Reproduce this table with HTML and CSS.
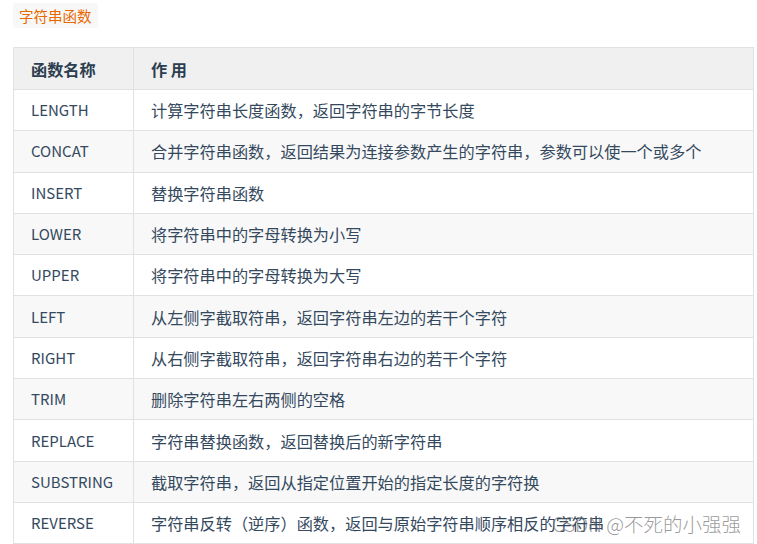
FILE: index.html
```html
<!DOCTYPE html>
<html lang="zh">
<head>
<meta charset="utf-8">
<link rel="stylesheet" href="styles.css">
</head>
<body>
<div class="page">
  <code class="tag">字符串函数</code>
  <table class="fn-table">
    <thead>
      <tr><th class="c1">函数名称</th><th>作 用</th></tr>
    </thead>
    <tbody>
      <tr><td class="c1">LENGTH</td><td>计算字符串长度函数，返回字符串的字节长度</td></tr>
      <tr><td class="c1">CONCAT</td><td>合并字符串函数，返回结果为连接参数产生的字符串，参数可以使一个或多个</td></tr>
      <tr><td class="c1">INSERT</td><td>替换字符串函数</td></tr>
      <tr><td class="c1">LOWER</td><td>将字符串中的字母转换为小写</td></tr>
      <tr><td class="c1">UPPER</td><td>将字符串中的字母转换为大写</td></tr>
      <tr><td class="c1">LEFT</td><td>从左侧字截取符串，返回字符串左边的若干个字符</td></tr>
      <tr><td class="c1">RIGHT</td><td>从右侧字截取符串，返回字符串右边的若干个字符</td></tr>
      <tr><td class="c1">TRIM</td><td>删除字符串左右两侧的空格</td></tr>
      <tr><td class="c1">REPLACE</td><td>字符串替换函数，返回替换后的新字符串</td></tr>
      <tr><td class="c1">SUBSTRING</td><td>截取字符串，返回从指定位置开始的指定长度的字符换</td></tr>
      <tr><td class="c1">REVERSE</td><td>字符串反转（逆序）函数，返回与原始字符串顺序相反的字符串</td></tr>
    </tbody>
  </table>
  <div class="watermark">CSDN @不死的小强强</div>
</div>
</body>
</html>
```

FILE: styles.css
```css
html, body {
  margin: 0;
  padding: 0;
  background: #ffffff;
  overflow: hidden;
}
body {
  font-family: "Noto Sans CJK SC", "Noto Sans", sans-serif;
  color: #34495e;
}
.page {
  position: relative;
  width: 757px;
  height: 544px;
  padding: 3px 3px 0 13px;
  box-sizing: border-box;
}
.tag {
  display: inline-block;
  font-family: "Noto Sans CJK SC", sans-serif;
  font-size: 14.5px;
  line-height: 25px;
  height: 25px;
  padding: 0 6px;
  background: #f8f8f8;
  color: #e96900;
  border-radius: 2px;
  vertical-align: top;
}
.fn-table {
  margin-top: 19px;
  width: 741px;
  border-collapse: collapse;
  font-size: 16.2px;
}
.fn-table th,
.fn-table td {
  border: 1px solid #dfe2e5;
  text-align: left;
  padding: 0 17px;
  line-height: 20px;
}
.fn-table th {
  height: 41px;
  background: #f0f0f0;
  font-weight: 700;
  color: #2c3e50;
}
.fn-table td {
  height: 40.3px;
}
.fn-table td.c1 {
  font-size: 15px;
}
.fn-table .c1 {
  width: 85px;
}
.fn-table tbody tr:nth-child(even) td {
  background: #f8f8f8;
}
.watermark {
  position: absolute;
  right: 16px;
  bottom: 6px;
  font-family: "Noto Sans CJK SC", sans-serif;
  font-size: 19.5px;
  font-weight: 300;
  color: rgba(110, 110, 110, 0.7);
}
```
